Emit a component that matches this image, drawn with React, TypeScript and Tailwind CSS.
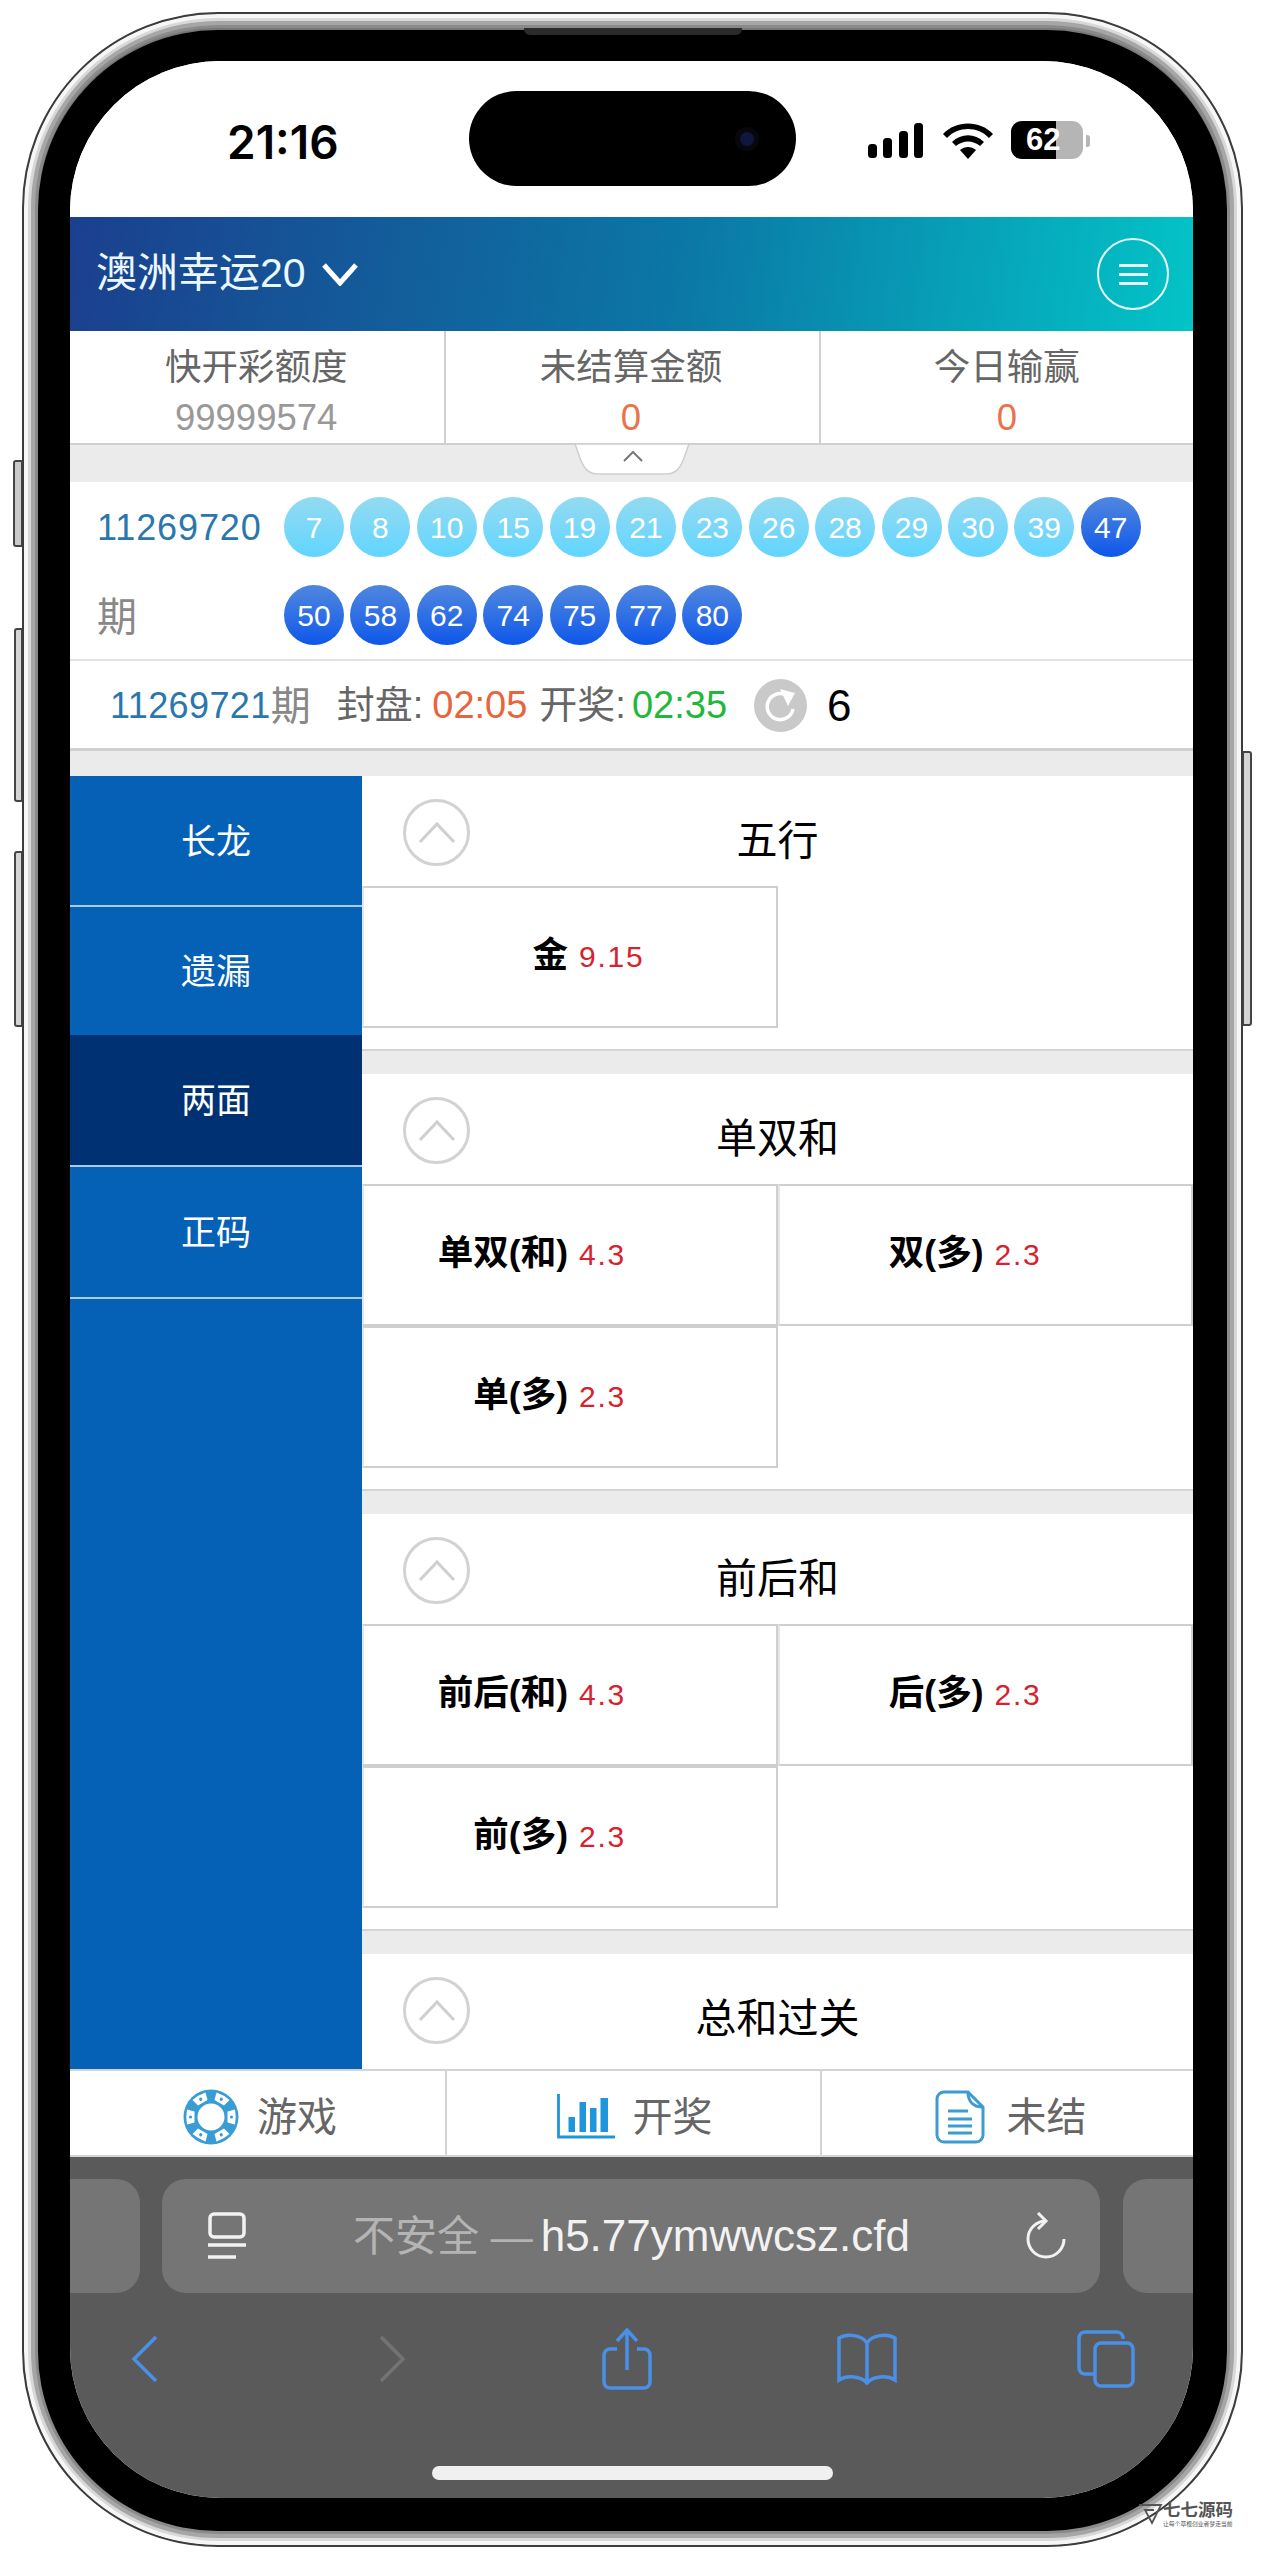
const lightBalls = [7, 8, 10, 15, 19, 21, 23, 26, 28, 29, 30, 39];
const darkBalls = [47, 50, 58, 62, 74, 75, 77, 80];

const sections = [
  { title: "五行", cells: [{ label: "金", odds: "9.15" }] },
  {
    title: "单双和",
    cells: [
      { label: "单双(和)", odds: "4.3" },
      { label: "双(多)", odds: "2.3" },
      { label: "单(多)", odds: "2.3" },
    ],
  },
  {
    title: "前后和",
    cells: [
      { label: "前后(和)", odds: "4.3" },
      { label: "后(多)", odds: "2.3" },
      { label: "前(多)", odds: "2.3" },
    ],
  },
  { title: "总和过关", cells: [] as { label: string; odds: string }[] },
];

const menu = [
  { name: "长龙", cls: "h-[131px] bg-[#0561b5] border-b-2 border-[#a9cce0]" },
  { name: "遗漏", cls: "h-[128px] bg-[#0561b5]" },
  { name: "两面", cls: "h-[132px] bg-[#003172] border-b-2 border-[#a9cce0]" },
  { name: "正码", cls: "h-[132px] bg-[#0561b5] border-b-2 border-[#a9cce0]" },
];

const Ball = ({ n, dark }: { n: number; dark?: boolean }) => (
  <div
    className={`w-[60px] h-[60px] rounded-full flex items-center justify-center text-white text-[30px] ${
      dark ? "bg-gradient-to-b from-[#4f86de] to-[#0b56ea]" : "bg-gradient-to-b from-[#93daf1] to-[#5fd5ff]"
    }`}
  >
    {n}
  </div>
);

const Section = ({ title, cells }: { title: string; cells: { label: string; odds: string }[] }) => (
  <div className="bg-white border-b-2 border-[#d4d4d4] mb-[23px] pb-[21px] shrink-0">
    <div className="h-[110px] relative flex items-center justify-center pt-[22px]">
      <div className="absolute left-[41px] top-[23px] w-[67px] h-[67px] rounded-full border-[3px] border-[#d2d2d2] flex items-center justify-center">
        <svg width="38" height="24" viewBox="0 0 38 24" fill="none" stroke="#cfcfcf" strokeWidth="3">
          <path d="M2 21 19 3l17 18" />
        </svg>
      </div>
      <span className="text-[41px] text-black">{title}</span>
    </div>
    <div className="grid grid-cols-2">
      {cells.map((c) => (
        <div
          key={c.label}
          className="h-[142px] border-2 border-[#cfcfcf] border-l-[#e6e6e6] flex items-center pb-[2px]"
        >
          <span className="w-[204px] text-right text-[35.500px] font-bold text-black whitespace-nowrap">{c.label}</span>
          <span className="ml-[11px] text-[30px] tracking-[1.800px] text-[#d6222e]">{c.odds}</span>
        </div>
      ))}
    </div>
  </div>
);

const Wheel = () => (
  <svg width="56" height="56" viewBox="0 0 56 56">
    <circle cx="28" cy="28" r="27.500" fill="#3a9cd4" />
    <circle cx="28" cy="28" r="13.500" fill="#fff" />
    {[0, 60, 120, 180, 240, 300].map((a) => (
      <g key={a} transform={`rotate(${a} 28 28)`}>
        <path d="M44.500 22.500 52 20.500q1.500 7.500 0 15l-7.500-2z" fill="#fff" />
        <circle cx="48.500" cy="28" r="1.600" fill="#3a9cd4" />
      </g>
    ))}
  </svg>
);

const BarsIcon = () => (
  <svg width="60" height="46" viewBox="0 0 60 46" fill="#1f96dc">
    <path d="M1.500 0v43H58" fill="none" stroke="#1f96dc" strokeWidth="2.800" />
    <rect x="11.500" y="23" width="6.500" height="15" />
    <rect x="22.500" y="8" width="6.500" height="30" />
    <rect x="33" y="14" width="6.500" height="24" />
    <rect x="43.500" y="4" width="7.500" height="34" />
  </svg>
);

const DocIcon = () => (
  <svg width="50" height="54" viewBox="0 0 50 54" fill="none" stroke="#3c9ccf" strokeWidth="3">
    <path d="M9 2h24l15 15v28a7 7 0 0 1-7 7H9a7 7 0 0 1-7-7V9a7 7 0 0 1 7-7z" />
    <path d="M33 2c0 9 5 15 15 15" />
    <path d="M13 21h20M13 29h24M13 36h24M13 43h24" strokeWidth="3" />
  </svg>
);

const Refresh = () => (
  <div className="w-[53px] h-[53px] rounded-full bg-[#c9c9c9] flex items-center justify-center">
    <svg width="36" height="36" viewBox="0 0 36 36" fill="none">
      <path d="M30 21A13 13 0 1 1 22 6.500" stroke="#fff" strokeWidth="3.500" />
      <path d="M17 1l15 4-7 13z" fill="#fff" />
    </svg>
  </div>
);

const App = () => {
  return (
    <div className="w-[1264px] h-[2560px] bg-white overflow-hidden relative [font-family:'Liberation_Sans','Noto_Sans_CJK_SC',sans-serif]">
      {/* side buttons */}
      <div className="absolute left-[13px] top-[460px] w-[10px] h-[87px] rounded-l-[3px] border-2 border-[#444] bg-[#c9c9c9]" />
      <div className="absolute left-[14px] top-[628px] w-[9px] h-[174px] rounded-l-[3px] border-2 border-[#444] bg-[#d4d4d4]" />
      <div className="absolute left-[14px] top-[851px] w-[9px] h-[176px] rounded-l-[3px] border-2 border-[#444] bg-[#d4d4d4]" />
      <div className="absolute left-[1242px] top-[751px] w-[10px] h-[275px] rounded-r-[3px] border-2 border-[#444] bg-[#d4d4d4]" />

      {/* phone frame */}
      <div className="absolute left-[22px] top-[12px] w-[1221px] h-[2535px] rounded-[196px] border-2 border-[#3c3c3c] bg-[#777] shadow-[inset_0_0_0_4px_#f6f6f6,inset_0_0_0_7px_#d8d8d8,inset_0_0_0_11px_#a6a6a6,inset_0_0_0_14px_#8a8a8a] pt-[16px] px-[14px] pb-[14px]">
        <div className="h-full rounded-[180px] bg-black pt-[31px] pl-[32px] pr-[34px] pb-[33px] relative">
          <div className="absolute left-[486px] top-[-2px] w-[218px] h-[7px] rounded-b-[6px] bg-[#2a2a2a]" />
          <div className="h-full rounded-[150px] bg-white overflow-hidden flex flex-col">
            {/* status bar */}
            <div className="h-[156px] shrink-0 flex items-start pl-[157px] bg-white">
              <div className="w-[113px] mt-[56px] text-[46px] leading-[50px] font-semibold text-black whitespace-nowrap [font-family:Inter,sans-serif]">
                21:16
              </div>
              <div className="ml-[129px] mt-[30px] w-[327px] h-[95px] rounded-[48px] bg-black flex items-center justify-end pr-[37px]">
                <div className="w-[24px] h-[24px] rounded-full bg-[#10163c] border-[5px] border-[#07070f]" />
              </div>
              <div className="ml-[71px] mt-[62px] flex items-start">
                <svg width="57" height="36" viewBox="0 0 57 36" fill="#000">
                  <rect x="1" y="21" width="9" height="14" rx="3.500" />
                  <rect x="16" y="15" width="9" height="20" rx="3.500" />
                  <rect x="32" y="8" width="9" height="27" rx="3.500" />
                  <rect x="47" y="0" width="9" height="35" rx="3.500" />
                </svg>
                <svg className="ml-[19px]" width="50" height="36" viewBox="0 0 50 36" fill="#000">
                  <path d="M0 11C13-3 37-3 50 11l-4 4C35 3 15 3 4 15z" />
                  <path d="M9 19c9-9 23-9 32 0l-4 4c-7-6-17-6-24 0z" />
                  <path d="M17 27c5-4 11-4 16 0l-8 9z" />
                </svg>
                <div className="ml-[18px] -mt-[2px] relative w-[72px] h-[38px] rounded-[11px] overflow-hidden bg-[#b5b5b5]">
                  <div className="h-full w-[45px] bg-black" />
                  <div className="absolute inset-0 pl-[15px] flex items-center text-white text-[31px] font-bold">62</div>
                </div>
                <div className="ml-[3px] mt-[12px] w-[4px] h-[12px] rounded-r-[3px] bg-[#b5b5b5]" />
              </div>
            </div>

            {/* header */}
            <div className="h-[114px] shrink-0 bg-[linear-gradient(98deg,#1b3f8e,#0b78a6_55%,#03c4c7)] flex items-center pl-[26px] pr-[24px]">
              <span className="text-[41px] text-[#eaf8ff]">澳洲幸运20</span>
              <svg className="ml-[16px]" width="36" height="24" viewBox="0 0 36 24" fill="none" stroke="#fff" strokeWidth="5">
                <path d="M2 3l16 18L34 3" />
              </svg>
              <div className="ml-auto w-[72px] h-[72px] rounded-full border-2 border-[#e6fbff] flex flex-col items-center justify-center gap-[6px]">
                <div className="w-[29px] h-[3px] bg-[#e6fbff]" />
                <div className="w-[29px] h-[3px] bg-[#e6fbff]" />
                <div className="w-[29px] h-[3px] bg-[#e6fbff]" />
              </div>
            </div>

            {/* account summary */}
            <div className="h-[114px] shrink-0 grid grid-cols-3 border-b-2 border-[#d0d0d0]">
              <div className="flex flex-col items-center pt-[16px] pr-[2px]">
                <span className="text-[36.500px] leading-[42px] text-[#666]">快开彩额度</span>
                <span className="text-[36.500px] leading-[42px] mt-[8px] text-[#999]">99999574</span>
              </div>
              <div className="flex flex-col items-center pt-[16px] pr-[3px] border-l-2 border-[#d0d0d0]">
                <span className="text-[36.500px] leading-[42px] text-[#666]">未结算金额</span>
                <span className="text-[36.500px] leading-[42px] mt-[8px] text-[#e9744c]">0</span>
              </div>
              <div className="flex flex-col items-center pt-[16px] border-l-2 border-[#d0d0d0]">
                <span className="text-[36.500px] leading-[42px] text-[#666]">今日输赢</span>
                <span className="text-[36.500px] leading-[42px] mt-[8px] text-[#e9744c]">0</span>
              </div>
            </div>

            {/* collapse tab */}
            <div className="h-[37px] shrink-0 bg-[#ebebeb] relative">
              <svg className="absolute left-[504px] top-[-1px]" width="116" height="32" viewBox="0 0 116 32">
                <path d="M1 0c5 12 7 30 22 30h70c15 0 17-18 22-30z" fill="#fff" stroke="#cfcfcf" strokeWidth="1.500" />
                <path d="M50 17l9-9 9 9" fill="none" stroke="#777" strokeWidth="2" />
              </svg>
            </div>

            {/* last draw */}
            <div className="h-[179px] shrink-0 flex bg-white border-b-2 border-[#e2e2e2]">
              <div className="w-[214px] pl-[27px] pt-[25px]">
                <div className="text-[36px] leading-[42px] tracking-[0.900px] text-[#2a77ad]">11269720</div>
                <div className="text-[40px] leading-[42px] text-[#888] mt-[47px]">期</div>
              </div>
              <div className="flex-1 flex flex-wrap content-start gap-x-[6.400px] gap-y-[28px] pt-[15px]">
                {lightBalls.map((n) => (
                  <Ball key={n} n={n} />
                ))}
                {darkBalls.map((n) => (
                  <Ball key={n} n={n} dark />
                ))}
              </div>
            </div>

            {/* countdown */}
            <div className="h-[90px] shrink-0 flex items-center bg-white border-b-[3px] border-[#d0d0d0] pl-[40px] pt-[2px] text-[38px]">
              <span className="text-[36px] text-[#2a77ad] tracking-[0.400px]">11269721</span>
              <span className="text-[40px] text-[#888] mr-[4px]">期</span>
              <span className="ml-[22px] text-[#666]">封盘:</span>
              <span className="ml-[9px] text-[#e8643c]">02:05</span>
              <span className="ml-[12px] text-[#666]">开奖:</span>
              <span className="ml-[6px] text-[#1fb83a]">02:35</span>
              <div className="ml-[27px]">
                <Refresh />
              </div>
              <span className="ml-[20px] text-[44px] text-black">6</span>
            </div>
            <div className="h-[25px] shrink-0 bg-[#ebebeb]" />

            {/* main */}
            <div className="h-[1293px] shrink-0 flex overflow-hidden bg-[#ebebeb]">
              <div className="w-[292px] shrink-0 bg-[#0561b5] flex flex-col">
                {menu.map((m) => (
                  <div key={m.name} className={`${m.cls} flex items-center justify-center pt-[3px] text-[35px] text-white`}>
                    {m.name}
                  </div>
                ))}
              </div>
              <div className="flex-1 flex flex-col overflow-hidden">
                {sections.map((s) => (
                  <Section key={s.title} title={s.title} cells={s.cells} />
                ))}
              </div>
            </div>

            {/* bottom tabs */}
            <div className="h-[88px] shrink-0 grid grid-cols-[375px_375px_1fr] bg-white border-t-2 border-b-2 border-[#d4d4d4] text-[40px] text-[#666]">
              <div className="flex items-center justify-center gap-[18px] pt-[7px] pl-[5px]">
                <Wheel />
                <span>游戏</span>
              </div>
              <div className="flex items-center justify-center gap-[16px] border-l-2 border-[#d4d4d4] pt-[7px] pl-[2px]">
                <BarsIcon />
                <span>开奖</span>
              </div>
              <div className="flex items-center justify-center gap-[22px] border-l-2 border-[#d4d4d4] pt-[7px] pl-[6px]">
                <DocIcon />
                <span>未结</span>
              </div>
            </div>

            {/* safari chrome */}
            <div className="flex-1 bg-[#5a5a5a] flex flex-col">
              <div className="mt-[22px] h-[114px] flex">
                <div className="w-[70px] rounded-r-[24px] bg-[#757575]" />
                <div className="ml-[22px] w-[938px] rounded-[24px] bg-[#757575] flex items-center pl-[46px]">
                  <svg width="38" height="48" viewBox="0 0 38 48" fill="none" stroke="#f2f2f2" strokeWidth="3.500">
                    <rect x="2" y="2" width="34" height="23" rx="4" />
                    <path d="M0 33h38M0 45h28" />
                  </svg>
                  <span className="ml-[107px] text-[42px] text-[#b4b4b4] whitespace-nowrap">不安全 —</span>
                  <span className="ml-[8px] text-[44px] text-[#f2f2f2]">h5.77ymwwcsz.cfd</span>
                  <svg className="ml-auto mr-[33px]" width="42" height="48" viewBox="0 0 42 48" fill="none" stroke="#f2f2f2" strokeWidth="3">
                    <path d="M21 9A18 18 0 1 0 39 27" />
                    <path d="M13 1l8 8-8 8" />
                  </svg>
                </div>
                <div className="ml-[23px] flex-1 rounded-l-[24px] bg-[#757575]" />
              </div>
              <div className="mt-[35px] h-[62px] flex items-center pl-[61px]">
                <svg width="28" height="48" viewBox="0 0 28 48" fill="none" stroke="#4a90e8" strokeWidth="3.500">
                  <path d="M25 2 3 24l22 22" />
                </svg>
                <svg className="ml-[220px]" width="26" height="48" viewBox="0 0 26 48" fill="none" stroke="#737373" strokeWidth="3.500">
                  <path d="M2 2l22 22L2 46" />
                </svg>
                <svg className="ml-[197px]" width="50" height="62" viewBox="0 0 50 62" fill="none" stroke="#4a90e8" strokeWidth="3.500">
                  <path d="M15 21H8a6 6 0 0 0-6 6v27a6 6 0 0 0 6 6h34a6 6 0 0 0 6-6V27a6 6 0 0 0-6-6h-7" />
                  <path d="M25 42V3M15 13 25 2l10 11" />
                </svg>
                <svg className="ml-[185px]" width="60" height="52" viewBox="0 0 60 52" fill="none" stroke="#4a90e8" strokeWidth="3.500">
                  <path d="M30 10C25 2 10 0 2 5v42c8-5 22-4 28 3 6-7 20-8 28-3V5C50 0 35 2 30 10zM30 10v40" />
                </svg>
                <svg className="ml-[180px]" width="58" height="58" viewBox="0 0 58 58" fill="none" stroke="#4a90e8" strokeWidth="3.500">
                  <rect x="18" y="13" width="38" height="43" rx="6" />
                  <path d="M46 9a6 6 0 0 0-6-7H8a6 6 0 0 0-6 6v30a6 6 0 0 0 6 6h9" />
                </svg>
              </div>
              <div className="mt-[76px] ml-[362px] w-[401px] h-[14px] rounded-[7px] bg-[#f0f0f0]" />
            </div>
          </div>
        </div>
      </div>

      {/* watermark */}
      <div className="absolute left-[1138px] top-[2501px] flex items-start">
        <svg width="25" height="22" viewBox="0 0 25 22" fill="none" stroke="#555" strokeWidth="1.800" className="mt-[2px]">
          <path d="M1 2h22L14 20 7 7h9" />
        </svg>
        <div className="flex flex-col">
          <span className="text-[17.500px] leading-[19px] font-bold text-[#555] whitespace-nowrap">七七源码</span>
          <span className="mt-[1px] text-[5.800px] leading-[7px] text-[#555] whitespace-nowrap">让每个草根创业者梦走当前</span>
        </div>
      </div>
    </div>
  );
};

export default App;
